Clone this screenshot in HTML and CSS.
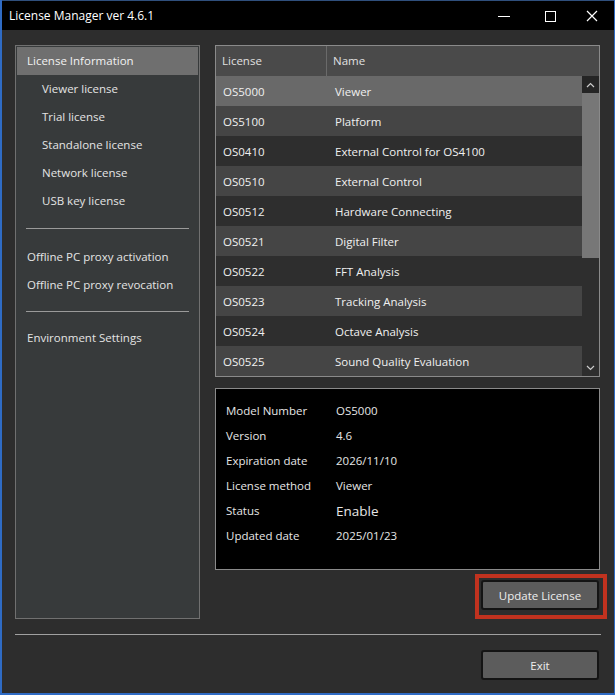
FILE: index.html
```html
<!DOCTYPE html>
<html lang="en">
<head>
<meta charset="UTF-8">
<title>License Manager ver 4.6.1</title>
<link rel="stylesheet" href="styles.css">
</head>
<body>
<div class="window">
    <div class="titlebar">
        <span class="title">License Manager ver 4.6.1</span>
        <div class="controls">
            <span class="ctl"><svg width="12" height="12" viewBox="0 0 12 12"><path d="M0 6.5h12" stroke="#fff" stroke-width="1"/></svg></span>
            <span class="ctl"><svg width="12" height="12" viewBox="0 0 12 12"><rect x="1.5" y="1.5" width="10" height="10" fill="none" stroke="#fff" stroke-width="1"/></svg></span>
            <span class="ctl"><svg width="12" height="12" viewBox="0 0 12 12"><path d="M1 1l10 10M11 1L1 11" stroke="#fff" stroke-width="1.2"/></svg></span>
        </div>
    </div>

    <div class="main">
        <div class="content">
            <div class="sidebar">
                <div class="nav-item selected">License Information</div>
                <div class="nav-item sub">Viewer license</div>
                <div class="nav-item sub">Trial license</div>
                <div class="nav-item sub">Standalone license</div>
                <div class="nav-item sub">Network license</div>
                <div class="nav-item sub">USB key license</div>
                <div class="nav-sep first"></div>
                <div class="nav-item">Offline PC proxy activation</div>
                <div class="nav-item">Offline PC proxy revocation</div>
                <div class="nav-sep"></div>
                <div class="nav-item">Environment Settings</div>
            </div>

            <div class="right">
                <div class="table">
                    <div class="thead">
                        <div class="th col1">License</div>
                        <div class="th col2">Name</div>
                    </div>
                    <div class="tbody">
                        <div class="rows">
                            <div class="row selected"><span class="col1">OS5000</span><span class="col2">Viewer</span></div>
                            <div class="row alt"><span class="col1">OS5100</span><span class="col2">Platform</span></div>
                            <div class="row"><span class="col1">OS0410</span><span class="col2">External Control for OS4100</span></div>
                            <div class="row alt"><span class="col1">OS0510</span><span class="col2">External Control</span></div>
                            <div class="row"><span class="col1">OS0512</span><span class="col2">Hardware Connecting</span></div>
                            <div class="row alt"><span class="col1">OS0521</span><span class="col2">Digital Filter</span></div>
                            <div class="row"><span class="col1">OS0522</span><span class="col2">FFT Analysis</span></div>
                            <div class="row alt"><span class="col1">OS0523</span><span class="col2">Tracking Analysis</span></div>
                            <div class="row"><span class="col1">OS0524</span><span class="col2">Octave Analysis</span></div>
                            <div class="row alt"><span class="col1">OS0525</span><span class="col2">Sound Quality Evaluation</span></div>
                        </div>
                        <div class="scrollbar">
                            <div class="arrow up"><svg width="9" height="6" viewBox="0 0 9 6"><path d="M1 5l3.5-3.5L8 5" fill="none" stroke="#ccc" stroke-width="1.2"/></svg></div>
                            <div class="thumb"></div>
                            <div class="track"></div>
                            <div class="arrow down"><svg width="9" height="6" viewBox="0 0 9 6"><path d="M1 1l3.5 3.5L8 1" fill="none" stroke="#ccc" stroke-width="1.2"/></svg></div>
                        </div>
                    </div>
                </div>

                <div class="details">
                    <span class="label">Model Number</span><span class="value">OS5000</span>
                    <span class="label">Version</span><span class="value">4.6</span>
                    <span class="label">Expiration date</span><span class="value">2026/11/10</span>
                    <span class="label">License method</span><span class="value">Viewer</span>
                    <span class="label">Status</span><span class="value big">Enable</span>
                    <span class="label">Updated date</span><span class="value">2025/01/23</span>
                </div>

                <div class="highlight">
                    <button class="btn">Update License</button>
                </div>
            </div>
        </div>

        <div class="divider"></div>

        <div class="footer">
            <button class="btn">Exit</button>
        </div>
    </div>
</div>
</body>
</html>
```

FILE: styles.css
```css
* {
    box-sizing: border-box;
}
body {
    margin: 0;
    font-family: 'Open Sans', 'Noto Sans', sans-serif;
    font-size: 11.5px;
    background-color: #2d2d2d;
    color: #e8e8e8;
}
.window {
    width: 615px;
    height: 695px;
    border: 1px solid #2f6bc4;
    border-left-width: 2px;
    border-bottom-width: 2px;
    border-top: none;
    background-color: #2d2d2d;
    display: flex;
    flex-direction: column;
}
.titlebar {
    height: 30px;
    flex: none;
    background-color: #000;
    border-top: 1px solid #2f4f7c;
    display: flex;
    align-items: center;
    justify-content: space-between;
    padding-left: 7px;
    color: #fff;
}
.title {
    font-size: 12px;
}
.controls {
    display: flex;
    height: 100%;
}
.ctl {
    width: 46px;
    display: flex;
    align-items: center;
    justify-content: center;
}
.controls .ctl:last-child {
    width: 38px;
    margin-right: 3px;
}

.main {
    flex: 1;
    padding: 15px 12px 0 13px;
    display: flex;
    flex-direction: column;
}
.content {
    display: flex;
    gap: 15px;
}

/* left navigation */
.sidebar {
    width: 185px;
    height: 574px;
    background-color: #373a3b;
    border: 1px solid #707070;
    padding: 1px;
}
.nav-item {
    height: 28px;
    line-height: 28px;
    padding-left: 10px;
    color: #e4e4e4;
    white-space: nowrap;
}
.nav-item.sub {
    padding-left: 25px;
}
.nav-item.selected {
    background-color: #6f6f6f;
    color: #f2f2f2;
}
.nav-sep {
    height: 1px;
    background-color: #9a9a9a;
    margin: 12px 9px 12px 9px;
}
.nav-sep.first {
    margin-top: 13px;
    margin-bottom: 14px;
}

/* right side */
.right {
    width: 385px;
    display: flex;
    flex-direction: column;
}
.table {
    height: 332px;
    border: 1px solid #8a8a8a;
    display: flex;
    flex-direction: column;
}
.thead {
    height: 30px;
    background-color: #4a4a4a;
    display: flex;
    color: #e0e0e0;
}
.th {
    line-height: 30px;
}
.thead .col1 {
    width: 111px;
    padding-left: 6px;
    border-right: 1px solid #6a6a6a;
}
.thead .col2 {
    padding-left: 6px;
}
.tbody {
    flex: 1;
    display: flex;
}
.rows {
    flex: 1;
}
.row {
    height: 30px;
    line-height: 30px;
    padding-top: 1px;
    display: flex;
    background-color: #2e2e2e;
    color: #f0f0f0;
}
.row.alt {
    background-color: #454545;
}
.row.selected {
    background-color: #696969;
}
.row .col1 {
    width: 112px;
    padding-left: 7px;
}
.row .col2 {
    padding-left: 7px;
}
.scrollbar {
    width: 17px;
    display: flex;
    flex-direction: column;
    background-color: #2e2e2e;
}
.arrow {
    height: 17px;
    display: flex;
    align-items: center;
    justify-content: center;
}
.arrow.up {
    background-color: #252525;
}
.thumb {
    height: 165px;
    background-color: #777;
}
.track {
    flex: 1;
}

.details {
    margin-top: 11px;
    height: 182px;
    background-color: #000;
    border: 1px solid #8a8a8a;
    padding: 9px 0 0 10px;
    display: grid;
    grid-template-columns: 110px 1fr;
    grid-auto-rows: 25px;
    align-items: center;
    color: #e6e6e6;
}
.value.big {
    font-size: 13.5px;
}

.highlight {
    align-self: flex-end;
    margin-top: 4px;
    margin-right: -7px;
    border: 4px solid #c0321f;
    padding: 2px 4px 5px 2px;
}
.btn {
    width: 118px;
    height: 30px;
    background-color: #5c5c5c;
    border: 2px solid #141414;
    border-radius: 3px;
    color: #eee;
    font-family: 'Open Sans', 'Noto Sans', sans-serif;
    font-size: 11.5px;
    padding: 0;
}

.divider {
    height: 1px;
    background-color: #a0a0a0;
    margin-top: 15px;
    width: 586px;
}
.footer {
    display: flex;
    justify-content: flex-end;
    padding-top: 15px;
    padding-right: 3px;
}
```
